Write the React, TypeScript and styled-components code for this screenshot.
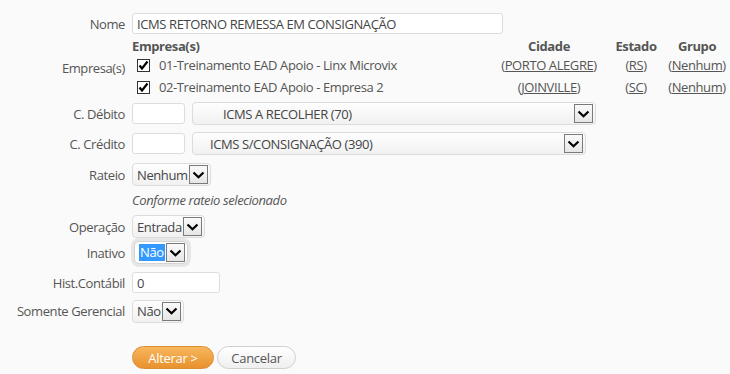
import React from 'react';
import styled, { createGlobalStyle, css } from 'styled-components';

const GlobalStyle = createGlobalStyle`
  body {
    margin: 0;
    background: #fafafa;
    font-family: "Open Sans", "Noto Sans", sans-serif;
    font-size: 13px;
    letter-spacing: -0.4px;
    color: #555;
  }
`;

const Form = styled.div`
  padding-top: 13px;
  width: 730px;
`;

const Row = styled.div<{ $mt?: number; $h?: number }>`
  display: flex;
  align-items: center;
  gap: 7px;
  margin-top: ${p => p.$mt ?? 0}px;
  min-height: ${p => p.$h ?? 22}px;
`;

const Label = styled.div`
  width: 125px;
  flex: none;
  text-align: right;
  color: #555;
  white-space: nowrap;
  line-height: 16px;
`;

const Input = styled.div<{ $w: number; $h?: number }>`
  box-sizing: border-box;
  width: ${p => p.$w}px;
  height: ${p => p.$h ?? 21}px;
  background: #fff;
  border: 1px solid #ddd;
  border-radius: 3px;
  padding-left: 4px;
  display: flex;
  align-items: center;
  color: #444;
  white-space: nowrap;
`;

const Select = styled.div<{ $w?: number; $pad?: number; $focus?: boolean }>`
  box-sizing: border-box;
  ${p => p.$w && css`width: ${p.$w}px;`}
  height: 23px;
  display: flex;
  align-items: center;
  background: linear-gradient(#fefefe, #f1f1f1);
  border: 1px solid #dcdcdc;
  border-radius: 4px;
  padding-left: ${p => p.$pad ?? 4}px;
  padding-right: 2px;
  color: #444;
  white-space: nowrap;
  ${p => p.$focus && css`
    background: #fff;
    border-color: #d4d4d4;
    box-shadow: 0 0 0 3px #e6e6e6;
    border-radius: 5px;
    margin-left: 2px;
  `}
`;

const Value = styled.span<{ $sel?: boolean }>`
  flex: 1;
  ${p => p.$sel && css`
    flex: none;
    background: #3399ff;
    color: #fff;
    padding: 0 1px;
    line-height: 17px;
  `}
`;

const ArrowBox = styled.span`
  box-sizing: border-box;
  width: 19px;
  height: 19px;
  flex: none;
  border: 1px solid #7a7a7a;
  background: linear-gradient(#fafafa, #e6e6e6);
  display: flex;
  align-items: center;
  justify-content: center;
  margin-left: 1px;
`;

const Arrow = () => (
  <ArrowBox>
    <svg width="13" height="8" viewBox="0 0 13 8">
      <path d="M1.5 1.5 L6.5 6.3 L11.5 1.5" fill="none" stroke="#000" strokeWidth="2.2" />
    </svg>
  </ArrowBox>
);

const Table = styled.div`
  display: grid;
  grid-template-columns: 365px 104px 70px 52px;
  grid-template-rows: 17px 22px 22px;
  align-items: center;
`;

const Head = styled.div<{ $left?: boolean }>`
  font-weight: bold;
  color: #555;
  text-align: ${p => (p.$left ? 'left' : 'center')};
  white-space: nowrap;
`;

const Cell = styled.div<{ $left?: boolean }>`
  display: flex;
  align-items: center;
  justify-content: ${p => (p.$left ? 'flex-start' : 'center')};
  white-space: nowrap;
  color: #555;
`;

const Check = styled.span`
  box-sizing: border-box;
  width: 13px;
  height: 13px;
  border: 1px solid #333;
  background: #fff;
  margin: 0 9px 0 5px;
  display: flex;
  align-items: center;
  justify-content: center;
`;

const Link = styled.a`
  color: #555;
  text-decoration: underline;
`;

const Hint = styled.div`
  font-style: italic;
  color: #555;
`;

const Button = styled.button<{ $primary?: boolean }>`
  box-sizing: border-box;
  height: 23px;
  border-radius: 12px;
  font-family: inherit;
  font-size: 13px;
  letter-spacing: -0.3px;
  padding: 0;
  ${p => p.$primary ? css`
    width: 82px;
    background: linear-gradient(#f8b65c, #e8922e);
    border: 1px solid #dc8e35;
    color: #fff;
  ` : css`
    width: 79px;
    background: linear-gradient(#ffffff, #efefef);
    border: 1px solid #cfcfcf;
    color: #555;
  `}
`;

const Buttons = styled.div`
  display: flex;
  gap: 3px;
`;

const CheckMark = () => (
  <Check>
    <svg width="11" height="11" viewBox="0 0 11 11">
      <path d="M1.5 5.5 L4 8.5 L9.5 1.5" fill="none" stroke="#000" strokeWidth="2.2" />
    </svg>
  </Check>
);

const empresas = [
  { nome: '01-Treinamento EAD Apoio - Linx Microvix', cidade: 'PORTO ALEGRE', uf: 'RS' },
  { nome: '02-Treinamento EAD Apoio - Empresa 2', cidade: 'JOINVILLE', uf: 'SC' },
];

export default function App() {
  return (
    <>
      <GlobalStyle />
      <Form>
        <Row $h={21}>
          <Label>Nome</Label>
          <Input $w={371} $h={21}>ICMS RETORNO REMESSA EM CONSIGNAÇÃO</Input>
        </Row>
        <Row $mt={3}>
          <Label>Empresa(s)</Label>
          <Table>
            <Head $left>Empresa(s)</Head>
            <Head>Cidade</Head>
            <Head>Estado</Head>
            <Head>Grupo</Head>
            {empresas.map(e => (
              <React.Fragment key={e.nome}>
                <Cell $left><CheckMark />{e.nome}</Cell>
                <Cell>(<Link>{e.cidade}</Link>)</Cell>
                <Cell>(<Link>{e.uf}</Link>)</Cell>
                <Cell>(<Link>Nenhum</Link>)</Cell>
              </React.Fragment>
            ))}
          </Table>
        </Row>
        <Row $mt={4} $h={23}>
          <Label>C. Débito</Label>
          <Input $w={53}></Input>
          <Select $w={404} $pad={30}><Value>ICMS A RECOLHER (70)</Value><Arrow /></Select>
        </Row>
        <Row $mt={7} $h={23}>
          <Label>C. Crédito</Label>
          <Input $w={53}></Input>
          <Select $w={394} $pad={17}><Value>ICMS S/CONSIGNAÇÃO (390)</Value><Arrow /></Select>
        </Row>
        <Row $mt={8} $h={23}>
          <Label>Rateio</Label>
          <Select><Value>Nenhum</Value><Arrow /></Select>
        </Row>
        <Row $mt={5} $h={16}>
          <Label></Label>
          <Hint>Conforme rateio selecionado</Hint>
        </Row>
        <Row $mt={6} $h={23}>
          <Label>Operação</Label>
          <Select><Value>Entrada</Value><Arrow /></Select>
        </Row>
        <Row $mt={3} $h={23}>
          <Label>Inativo</Label>
          <Select $focus><Value $sel>Não</Value><Arrow /></Select>
        </Row>
        <Row $mt={8} $h={21}>
          <Label>Hist.Contábil</Label>
          <Input $w={88}>0</Input>
        </Row>
        <Row $mt={6} $h={24}>
          <Label>Somente Gerencial</Label>
          <Select><Value>Não</Value><Arrow /></Select>
        </Row>
        <Row $mt={23} $h={23}>
          <Label></Label>
          <Buttons>
            <Button $primary>Alterar &gt;</Button>
            <Button>Cancelar</Button>
          </Buttons>
        </Row>
      </Form>
    </>
  );
}
